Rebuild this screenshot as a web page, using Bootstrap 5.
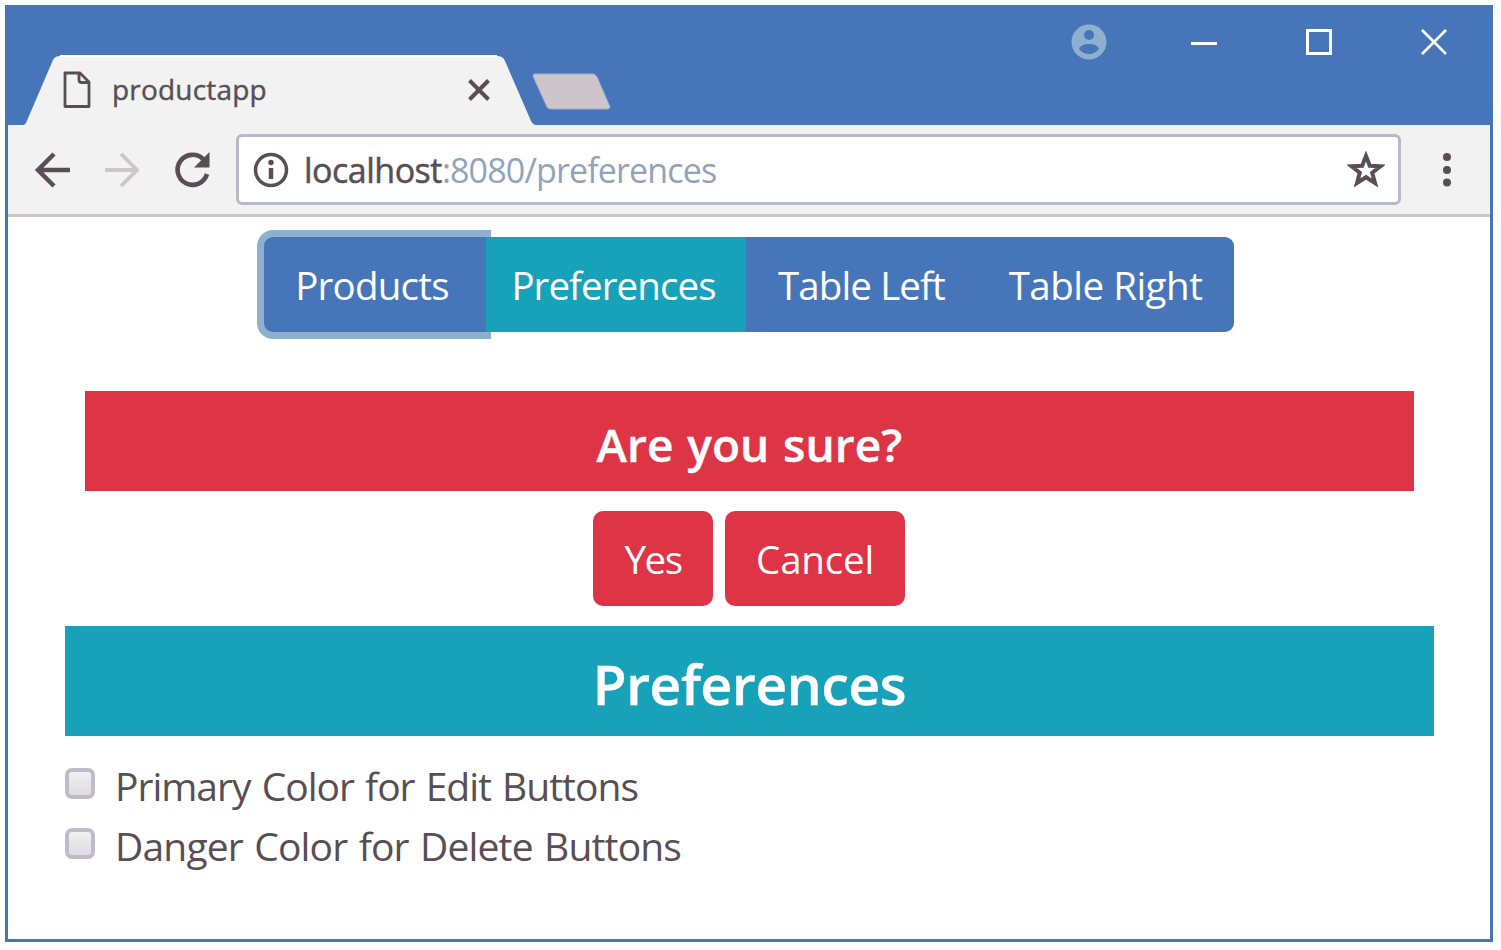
<!DOCTYPE html>
<html lang="en">
<head>
<meta charset="utf-8">
<title>productapp</title>
<meta name="viewport" content="width=device-width, initial-scale=1">
<link href="https://cdn.jsdelivr.net/npm/bootstrap@5.3.0/dist/css/bootstrap.min.css" rel="stylesheet">
<style>
  :root { --blue: #4676b9; --teal: #17a2b9; --red: #dd3545; --ink: #584e54; --pale: #8eb0cf; --mist: #cdc5c9; }
  body { font-family: "Open Sans", "Noto Sans", sans-serif; color: var(--ink); background: #fff; overflow: hidden; }
  svg { display: block; flex: none; }
  .win { width: 1488px; height: 937px; margin: 5px 0 0 5px; border: 3px solid var(--blue); border-top: 0; }
  .titlebar { height: 120px; background: var(--blue); margin: 0 -1px; }
  .tabshape { width: 512px; height: 70px; margin-left: 17px; }
  .tabbody { padding-left: 39px; height: 70px; }
  .tabtitle { font-size: 28px; line-height: 68px; width: 355px; margin: -2px 0 0 21px; letter-spacing: .2px; white-space: nowrap; -webkit-text-stroke: .4px; }
  .newtab { margin: 0 0 14px -6px; }
  .controls { height: 74px; padding-right: 43px; }
  .gap-min { margin-left: 84px; } .gap-max { margin-left: 88px; } .gap-close { margin-left: 87px; }
  .gap-nav { margin-left: 32px; } .gap-menu { margin-left: 41px; }
  .toolbar { height: 92px; background: #f1f2f1; border-bottom: 3px solid var(--mist); padding-left: 24px; }
  .omni { width: 1165px; height: 71px; background: #fff; border: 3px solid #b9bac8; border-radius: 6px; padding: 0 13px 0 14px; margin-left: 24px; }
  .addr { font-size: 34px; line-height: 64px; margin-left: 15px; white-space: nowrap; }
  .addr .host { letter-spacing: -.5px; -webkit-text-stroke: .5px; }
  .addr .rest { color: #91a3bb; letter-spacing: -.85px; }
  .page { padding: 20px 57px 0; }
  .lbl { font-size: 39px; line-height: 60px; white-space: nowrap; word-spacing: 2px; }
  .opt-edit { letter-spacing: -1px; } .opt-del { letter-spacing: -.83px; }
  .tabs-row { width: 970px; height: 95px; margin-left: 199px; }
  .tabs-row .btn, .choice .btn { border: 0; padding: 0; height: 95px; line-height: 96px; font-size: 38.5px; color: #fff; border-radius: 0; flex: none; white-space: nowrap; }
  .tabs-row .btn { background: var(--blue); }
  .tabs-row .b1 { width: 223px; padding-right: 7px; letter-spacing: -.75px; border-radius: 9px 0 0 9px; box-shadow: 0 0 0 7px var(--pale); clip-path: inset(-8px -4px -8px -8px); z-index: 0; }
  .tabs-row .b2 { width: 260px; padding-right: 5px; letter-spacing: -.93px; background: var(--teal); z-index: 1; }
  .tabs-row .b3 { width: 233px; letter-spacing: -.9px; }
  .tabs-row .b4 { width: 257px; letter-spacing: -.5px; border-radius: 0 9px 9px 0; }
  .ask { height: 100px; margin: 59px 19px 20px 20px; background: var(--red); color: #fff; font-size: 46px; line-height: 106px; font-weight: 600; letter-spacing: .1px; word-spacing: 1.5px; -webkit-text-stroke: .4px; }
  .choice { gap: 12px; }
  .choice .btn { background: var(--red); border-radius: 10px; }
  .choice .yes { width: 120px; letter-spacing: -1.5px; } .choice .cancel { width: 180px; letter-spacing: -.2px; }
  .heading { height: 110px; margin: 20px -1px 20px 0; background: var(--teal); color: #fff; font-size: 55px; line-height: 116px; font-weight: 600; letter-spacing: -.3px; -webkit-text-stroke: .4px; }
  .box { width: 30px; height: 31px; border: 4px solid #bfbcc9; border-radius: 7px; background: linear-gradient(#f0f0f0, #dedcde); margin: 0 20px 6px 0; flex: none; }
</style>
</head>
<body>
<div class="win">
  <div class="titlebar d-flex justify-content-between">
    <div class="d-flex align-items-end">
      <div class="tabshape position-relative">
        <svg class="position-absolute" width="512" height="70"><path d="M0 70 2 68 29 5Q31 1 36 1H473Q479 1 481 6L507 66Q509 70 512 70Z" fill="#f1f2f1"/><path d="M36 1H473" stroke="#fff" stroke-width="2"/></svg>
        <div class="tabbody d-flex align-items-center position-relative">
          <svg width="28" height="38" fill="none" stroke="#584e54" stroke-width="2.8" stroke-linejoin="round"><path d="M3 2H17L26 11V35.500H2V2ZM16 2V9Q16 11.500 18.500 11.500H26"/></svg>
          <span class="tabtitle">productapp</span>
          <svg width="24" height="24" stroke="#584e54" stroke-width="4"><path d="M2.500 2.500 21.500 21.500M21.500 2.500 2.500 21.500"/></svg>
        </div>
      </div>
      <svg class="newtab" width="82" height="40"><path d="M4 3H63Q65 3 67 6L80 36Q80 38 77 38H21Q18 38 17 36L3 5Z" fill="#cdc5c9" stroke="#9fb3cd" stroke-width="1"/></svg>
    </div>
    <div class="controls d-flex align-items-center">
      <svg width="36" height="36"><circle cx="18" cy="18" r="17.500" fill="#8eb0cf"/><circle cx="18" cy="11" r="5" fill="#4676b9"/><path d="M8 25Q10 20 18 20T28 25Q24 30 18 30T8 25Z" fill="#4676b9"/></svg>
      <svg class="gap-min" width="26" height="26"><path d="M0 14.500H26" stroke="#fff" stroke-width="3"/></svg>
      <svg class="gap-max" width="28" height="28"><rect x="2.500" y="2.500" width="23" height="23" fill="none" stroke="#fff" stroke-width="3"/></svg>
      <svg class="gap-close" width="28" height="28"><path d="M2 2 26 26M26 2 2 26" stroke="#fff" stroke-width="2.600"/></svg>
    </div>
  </div>
  <div class="toolbar d-flex align-items-center">
    <svg width="40" height="40" fill="none" stroke="#584e54" stroke-width="4.500"><path d="M38 20H6M22 4 6 20 22 36"/></svg>
    <svg class="gap-nav" width="38" height="40" fill="none" stroke="#cdc5c9" stroke-width="3.800"><path d="M1 20H33M17 4 33 20 17 36"/></svg>
    <svg class="gap-nav" width="38" height="40"><path d="M33 24A15 15 0 1 1 29.500 9.500" fill="none" stroke="#584e54" stroke-width="4.600"/><path d="M35.500 2V17.500H20Z" fill="#584e54"/></svg>
    <div class="omni d-flex align-items-center">
      <svg width="36" height="36"><circle cx="18" cy="18" r="15.500" fill="none" stroke="#584e54" stroke-width="3.500"/><circle cx="18" cy="10.500" r="2.700" fill="#584e54"/><path d="M18 16V27" stroke="#584e54" stroke-width="4.500"/></svg>
      <span class="addr"><span class="host">localhost</span><span class="rest">:8080/preferences</span></span>
      <svg class="ms-auto" width="38" height="38"><path d="M19 5 22.800 14.800 33.500 15.300 25.200 21.800 28 32 19 26.200 10 32 12.800 21.800 4.500 15.300 15.200 14.800Z" fill="none" stroke="#584e54" stroke-width="4"/></svg>
    </div>
    <svg class="gap-menu" width="10" height="36" fill="#584e54"><circle cx="5" cy="5" r="4"/><circle cx="5" cy="18" r="4"/><circle cx="5" cy="30.500" r="4"/></svg>
  </div>
  <main class="page">
    <div class="tabs-row btn-group d-flex">
      <button class="btn b1">Products</button>
      <button class="btn b2">Preferences</button>
      <button class="btn b3">Table Left</button>
      <button class="btn b4">Table Right</button>
    </div>
    <h4 class="ask text-center">Are you sure?</h4>
    <div class="choice d-flex justify-content-center">
      <button class="btn yes">Yes</button>
      <button class="btn cancel">Cancel</button>
    </div>
    <h3 class="heading text-center">Preferences</h3>
    <label class="lbl d-flex align-items-center"><span class="box"></span><span class="opt-edit">Primary Color for Edit Buttons</span></label>
    <label class="lbl d-flex align-items-center"><span class="box"></span><span class="opt-del">Danger Color for Delete Buttons</span></label>
  </main>
</div>
<script src="https://cdn.jsdelivr.net/npm/bootstrap@5.3.0/dist/js/bootstrap.bundle.min.js"></script>
</body>
</html>
